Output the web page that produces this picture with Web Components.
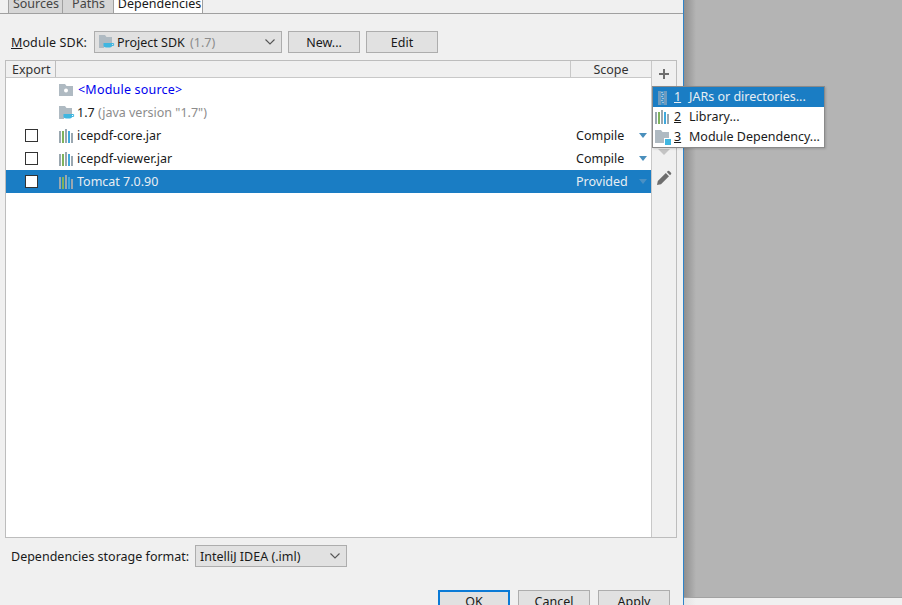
<!DOCTYPE html>
<html><head><meta charset="utf-8"><title>Dependencies</title>
<style>
html,body{margin:0;padding:0;width:902px;height:605px;overflow:hidden;background:#f0f0f0;font:12.5px "Noto Sans","Open Sans",sans-serif;color:#1a1a1a}
</style></head><body>
<app-window></app-window>
<script>
const FONT='"Noto Sans","Open Sans",sans-serif';
const ICONS={
 sdk:'<path d="M0 1h6l1.5 2H13v6H5v5H0z" fill="#afbac2"/><path d="M4.5 9H13v2.8c0 1-1 1.7-2 1.7H7c-1.2 0-2.5-.7-2.5-1.7z" fill="#40b6e0"/><path d="M13 9.5h1.6v2H13" fill="none" stroke="#40b6e0"/>',
 src:'<path d="M0 2h6l1.5 2H14v10H0z" fill="#afbac2"/><circle cx="7" cy="8.5" r="2" fill="#fff"/>',
 lib:'<rect x="0" y="3" width="2" height="12" fill="#9aa7b0"/><rect x="3" y="3" width="2" height="12" fill="#7fb35c"/><rect x="6" y="1" width="2" height="14" fill="#9aa7b0"/><rect x="9" y="3" width="2" height="12" fill="#40a9dc"/><rect x="12" y="5" width="2" height="10" fill="#9aa7b0"/>',
 jar:'<rect x="3" y="2" width="3" height="14" fill="#6f9bbd"/><rect x="9" y="2" width="3" height="14" fill="#6f9bbd"/><rect x="6" y="2" width="3" height="14" fill="#3f94cc"/><path d="M6 3.5h2M7 5.5h2M6 7.5h2M7 9.5h2M6 11.5h2M7 13.5h2" stroke="#9cc0da" stroke-width="1"/>',
 mod:'<path d="M0 1h6l1.5 2H14v11H0z" fill="#afbac2"/><rect x="9" y="9" width="7" height="7" fill="#fff"/><rect x="10" y="10" width="6" height="6" fill="#40b6e0"/>',
 plus:'<path d="M7 2v10M2 7h10" stroke="#6e6e6e" stroke-width="2" fill="none"/>',
 pencil:'<path d="M1 15l.8-4 8-8 3.2 3.2-8 8z" fill="#6e6e6e"/><path d="M10.8 2l1-1a1 1 0 011.4 0l1.8 1.8a1 1 0 010 1.4l-1 1z" fill="#6e6e6e"/>',
 down:'<path d="M0 0h12L6 6z" fill="#c4c4c4"/>'
};
function def(name,css,html,init){
 const t=document.createElement('template');
 t.innerHTML='<style>'+css+'</style>'+html;
 customElements.define(name,class extends HTMLElement{
  constructor(){super();this.attachShadow({mode:'open'}).appendChild(t.content.cloneNode(true));}
  connectedCallback(){if(init)init.call(this,this.shadowRoot);}
 });
}
def('x-icon',':host{display:inline-flex;width:16px;height:16px;flex:none}svg{width:100%;height:100%;display:block}','<svg></svg>',function(r){const s=r.querySelector('svg');const n=this.getAttribute('name');s.setAttribute('viewBox',n==='down'?'0 0 12 6':n==='plus'?'0 0 14 14':'0 0 16 16');s.innerHTML=ICONS[n]||'';});
def('x-button',`:host{display:flex;flex:none;box-sizing:border-box;width:72px;height:22px;border:1px solid #adadad;background:#e1e1e1;align-items:center;justify-content:center;color:#1a1a1a;font-size:12.5px}
:host([default]){border:2px solid #0a7ad6}`,'<slot></slot>');
def('x-combo',`:host{display:flex;flex:none;box-sizing:border-box;height:22px;border:1px solid #adadad;background:#e1e1e1;align-items:center;padding:0 6px 0 4px;gap:2px;font-size:12.5px;color:#1a1a1a}
.t{flex:1;white-space:nowrap}svg{flex:none;width:10px;height:6px}`,'<slot name="icon"></slot><span class="t"><slot></slot></span><svg viewBox="0 0 10 6"><path d="M.5.5L5 5 9.5.5" fill="none" stroke="#555" stroke-width="1.1"/></svg>');
def('x-tabs',`:host{display:flex;flex:none;height:14px;box-sizing:border-box;border-bottom:1px solid #a0a0a0;padding-left:9px;align-items:flex-end;overflow:hidden;position:relative}
.s{display:flex;height:14px;align-items:flex-end;margin-bottom:-1px}`,'<div class="s"><slot></slot></div>');
def('x-tab',`:host{display:flex;flex:none;box-sizing:border-box;height:24px;padding:3px 0 0 1px;align-items:center;justify-content:center;background:#d6d6d6;border:1px solid #a0a0a0;border-top:0;margin-left:-1px;white-space:nowrap;color:#444;font-size:12.5px}
:host([active]){background:#fff;border-bottom-color:#fff;color:#1a1a1a;padding-left:3px}`,'<slot></slot>');
def('dep-row',`:host{display:flex;height:23px;align-items:center;box-sizing:border-box;white-space:nowrap;font-size:12.5px;color:#1a1a1a}
:host([selected]){background:#1a7dc4;color:#e8eef3}
.ck{width:49px;flex:none;display:flex;justify-content:flex-end;box-sizing:border-box}
.box{width:11px;height:11px;border:1px solid #333;background:#fff;margin-right:17px;visibility:hidden}
:host([check]) .box{visibility:visible}
.n{flex:1;display:flex;align-items:center;gap:2px;margin-left:4px}
.sc{width:75px;flex:none;display:flex;justify-content:space-between;align-items:center;padding-right:4px;box-sizing:border-box}
.tri{width:0;height:0;border:4px solid transparent;border-top:5px solid #4a8fbc;border-bottom:0;visibility:hidden}
:host([scope]) .tri{visibility:visible}
:host([selected]) .tri{border-top-color:#4a90c4}`,
'<div class="ck"><div class="box"></div></div><div class="n"><slot name="icon"></slot><span><slot></slot></span></div><div class="sc"><span class="sv"></span><div class="tri"></div></div>',
function(r){r.querySelector('.sv').textContent=this.getAttribute('scope')||'';});
def('dep-table',`:host{display:flex;flex:none;box-sizing:border-box;width:672px;height:478px;border:1px solid #bdbdbd;background:#fff}
.main{flex:1;display:flex;flex-direction:column;min-width:0}
.hd{height:16px;flex:none;display:flex;background:#f0f0f0;border-bottom:1px solid #c8c8c8;font-size:12.5px;color:#333;box-sizing:content-box}
.c1{width:50px;padding-left:6px;border-right:1px solid #bdbdbd;box-sizing:border-box;line-height:17px}
.c2{flex:1}
.c3{width:81px;border-left:1px solid #c8c8c8;box-sizing:border-box;text-align:center;line-height:17px}
.side{width:24px;flex:none;border-left:1px solid #c8c8c8;background:#f0f0f0;display:flex;flex-direction:column;align-items:center;box-sizing:content-box}`,
`<div class="main"><div class="hd"><div class="c1">Export</div><div class="c2"></div><div class="c3">Scope</div></div><slot></slot></div>
<div class="side"><x-icon name="plus" style="margin-top:6px;width:14px;height:14px"></x-icon><x-icon name="down" style="margin-top:68px;width:12px;height:6px"></x-icon><x-icon name="pencil" style="margin-top:15px"></x-icon></div>`);
def('x-menu-item',`:host{display:flex;height:20px;align-items:center;box-sizing:border-box;padding-left:2px;white-space:nowrap;font-size:12.5px;color:#1a1a1a}
:host([selected]){background:#1a7dc4;color:#e8eef3}
u{margin:0 0 2px 3px;text-decoration:underline;width:7px;display:inline-block}
span{margin:0 0 2px 8px}`,
'<slot name="icon"></slot><u></u><span><slot></slot></span>',
function(r){r.querySelector('u').textContent=this.getAttribute('key');});
def('x-menu',`:host{position:absolute;left:652px;top:86px;width:173px;box-sizing:border-box;height:62px;border:1px solid #8a8a8a;background:#fff;display:block;box-shadow:1px 1px 2px rgba(0,0,0,.15)}`,'<slot></slot>');
def('app-window',`:host{display:flex;width:902px;height:605px;position:relative;font-family:${FONT};overflow:hidden}
.dlg{width:684px;height:605px;flex:none;box-sizing:border-box;border-right:1px solid #2f83c8;background:#f0f0f0;display:flex;flex-direction:column;overflow:hidden}
.r1{display:flex;flex:none;align-items:center;height:22px;margin:17px 0 0 11px}
.lbl{font-size:12.5px;white-space:nowrap}
.tb{margin:7px 0 0 5px}
.r2{display:flex;flex:none;align-items:center;height:22px;margin:7px 0 0 11px}
.r3{display:flex;flex:none;gap:8px;margin:23px 0 0 438px}
.bk{flex:1;display:flex;flex-direction:column}
.gr{height:597px;flex:none;background:linear-gradient(90deg,#8f8f8f,#b4b4b4 12px);border-bottom:1px solid #a2a2a2;box-sizing:content-box}
.st{flex:1;background:linear-gradient(90deg,#e4e4e4,#f0f0f0 12px)}`,
`<div class="dlg">
<x-tabs><x-tab style="width:55px">Sources</x-tab><x-tab style="width:52px">Paths</x-tab><x-tab active style="width:90px">Dependencies</x-tab></x-tabs>
<div class="r1"><span class="lbl" style="width:83px;letter-spacing:.1px"><u>M</u>odule SDK:</span>
<x-combo style="width:188px"><x-icon slot="icon" name="sdk"></x-icon>Project SDK <span style="color:#8c8c8c;margin-left:2px">(1.7)</span></x-combo>
<x-button style="margin-left:6px">New...</x-button><x-button style="margin-left:6px">Edit</x-button></div>
<dep-table class="tb">
<dep-row><x-icon slot="icon" name="src"></x-icon><span style="color:#0000ee;letter-spacing:.2px;margin-left:1px">&lt;Module source&gt;</span></dep-row>
<dep-row><x-icon slot="icon" name="sdk"></x-icon>1.7 <span style="color:#8c8c8c">(java version "1.7")</span></dep-row>
<dep-row check scope="Compile"><x-icon slot="icon" name="lib"></x-icon>icepdf-core.jar</dep-row>
<dep-row check scope="Compile"><x-icon slot="icon" name="lib"></x-icon>icepdf-viewer.jar</dep-row>
<dep-row check selected scope="Provided"><x-icon slot="icon" name="lib"></x-icon>Tomcat 7.0.90</dep-row>
</dep-table>
<div class="r2"><span class="lbl" style="width:184px">Dependencies storage format:</span><x-combo style="width:152px">IntelliJ IDEA (.iml)</x-combo></div>
<div class="r3"><x-button default>OK</x-button><x-button>Cancel</x-button><x-button>Apply</x-button></div>
</div>
<div class="bk"><div class="gr"></div><div class="st"></div></div>
<x-menu>
<x-menu-item selected key="1"><x-icon slot="icon" name="jar"></x-icon>JARs or directories...</x-menu-item>
<x-menu-item key="2"><x-icon slot="icon" name="lib"></x-icon>Library...</x-menu-item>
<x-menu-item key="3"><x-icon slot="icon" name="mod"></x-icon>Module Dependency...</x-menu-item>
</x-menu>`);
</script>
</body></html>
